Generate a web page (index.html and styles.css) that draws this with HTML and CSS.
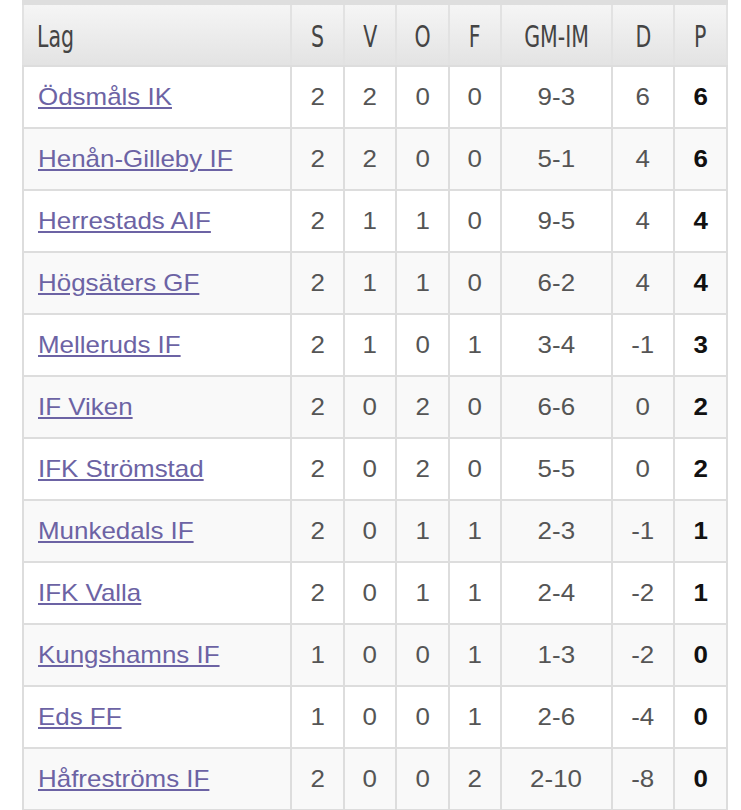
FILE: index.html
```html
<!DOCTYPE html>
<html lang="sv">
<head>
<meta charset="utf-8">
<title>Tabell</title>
<link rel="stylesheet" href="styles.css">
</head>
<body>
<div class="wrap">
  <div class="topbar"></div>
  <table class="standings">
    <colgroup>
      <col class="c-lag"><col class="c-n"><col class="c-n2"><col class="c-n"><col class="c-n2"><col class="c-gm"><col class="c-d"><col class="c-n">
    </colgroup>
    <thead>
      <tr>
        <th class="team"><span>Lag</span></th>
        <th><span>S</span></th>
        <th><span>V</span></th>
        <th><span>O</span></th>
        <th><span>F</span></th>
        <th><span>GM-IM</span></th>
        <th><span>D</span></th>
        <th><span>P</span></th>
      </tr>
    </thead>
    <tbody>
      <tr><td class="team"><a href="#">Ödsmåls IK</a></td><td><span>2</span></td><td><span>2</span></td><td><span>0</span></td><td><span>0</span></td><td><span>9-3</span></td><td><span>6</span></td><td class="pts"><span>6</span></td></tr>
      <tr><td class="team"><a href="#">Henån-Gilleby IF</a></td><td><span>2</span></td><td><span>2</span></td><td><span>0</span></td><td><span>0</span></td><td><span>5-1</span></td><td><span>4</span></td><td class="pts"><span>6</span></td></tr>
      <tr><td class="team"><a href="#">Herrestads AIF</a></td><td><span>2</span></td><td><span>1</span></td><td><span>1</span></td><td><span>0</span></td><td><span>9-5</span></td><td><span>4</span></td><td class="pts"><span>4</span></td></tr>
      <tr><td class="team"><a href="#">Högsäters GF</a></td><td><span>2</span></td><td><span>1</span></td><td><span>1</span></td><td><span>0</span></td><td><span>6-2</span></td><td><span>4</span></td><td class="pts"><span>4</span></td></tr>
      <tr><td class="team"><a href="#">Melleruds IF</a></td><td><span>2</span></td><td><span>1</span></td><td><span>0</span></td><td><span>1</span></td><td><span>3-4</span></td><td><span>-1</span></td><td class="pts"><span>3</span></td></tr>
      <tr><td class="team"><a href="#">IF Viken</a></td><td><span>2</span></td><td><span>0</span></td><td><span>2</span></td><td><span>0</span></td><td><span>6-6</span></td><td><span>0</span></td><td class="pts"><span>2</span></td></tr>
      <tr><td class="team"><a href="#">IFK Strömstad</a></td><td><span>2</span></td><td><span>0</span></td><td><span>2</span></td><td><span>0</span></td><td><span>5-5</span></td><td><span>0</span></td><td class="pts"><span>2</span></td></tr>
      <tr><td class="team"><a href="#">Munkedals IF</a></td><td><span>2</span></td><td><span>0</span></td><td><span>1</span></td><td><span>1</span></td><td><span>2-3</span></td><td><span>-1</span></td><td class="pts"><span>1</span></td></tr>
      <tr><td class="team"><a href="#">IFK Valla</a></td><td><span>2</span></td><td><span>0</span></td><td><span>1</span></td><td><span>1</span></td><td><span>2-4</span></td><td><span>-2</span></td><td class="pts"><span>1</span></td></tr>
      <tr><td class="team"><a href="#">Kungshamns IF</a></td><td><span>1</span></td><td><span>0</span></td><td><span>0</span></td><td><span>1</span></td><td><span>1-3</span></td><td><span>-2</span></td><td class="pts"><span>0</span></td></tr>
      <tr><td class="team"><a href="#">Eds FF</a></td><td><span>1</span></td><td><span>0</span></td><td><span>0</span></td><td><span>1</span></td><td><span>2-6</span></td><td><span>-4</span></td><td class="pts"><span>0</span></td></tr>
      <tr><td class="team"><a href="#">Håfreströms IF</a></td><td><span>2</span></td><td><span>0</span></td><td><span>0</span></td><td><span>2</span></td><td><span>2-10</span></td><td><span>-8</span></td><td class="pts"><span>0</span></td></tr>
    </tbody>
  </table>
</div>
</body>
</html>
```
FILE: styles.css
```css
html, body {
  margin: 0;
  padding: 0;
  background: #ffffff;
}

.wrap {
  padding-left: 22px;
  width: 705px;
}

.topbar {
  height: 5px;
  background: #dedede;
  margin-right: -1px;
}

.standings {
  border-collapse: collapse;
  table-layout: fixed;
  width: 705px;
  font-family: "Liberation Sans", Arial, sans-serif;
  font-size: 24px;
  color: #555555;
}

.c-lag { width: 268px; }
.c-n { width: 53px; }
.c-n2 { width: 52px; }
.c-gm { width: 111px; }
.c-d { width: 62px; }

.standings th,
.standings td {
  border: 2px solid #dddddd;
  height: 60px;
  padding: 0;
  text-align: center;
  vertical-align: middle;
}

.standings td span,
.standings td a {
  display: inline-block;
  transform: scaleX(1.08);
}

.standings th {
  background: linear-gradient(to bottom, #f5f5f5 0%, #e3e3e3 100%);
  border-color: #e2e2e2;
  border-top: 0;
  border-bottom-color: #dddddd;
  font-family: "DejaVu Sans Condensed", "Liberation Sans Narrow", sans-serif;
  font-weight: normal;
  font-size: 30px;
  color: #444444;
  padding-top: 3px;
  height: 57px;
}

.standings th span {
  display: inline-block;
  transform: scaleX(0.76);
}

.standings th.team {
  text-align: left;
  padding-left: 13px;
}

.standings th.team span {
  transform-origin: left center;
}

.standings td.team {
  text-align: left;
  padding-left: 14px;
}

.standings td.team a {
  transform-origin: left center;
}

.standings tbody tr:nth-child(even) td {
  background: #f9f9f9;
}

.standings a {
  color: #6c63a4;
  text-decoration: underline;
}

.standings td.pts {
  font-weight: bold;
  color: #111111;
}
```
